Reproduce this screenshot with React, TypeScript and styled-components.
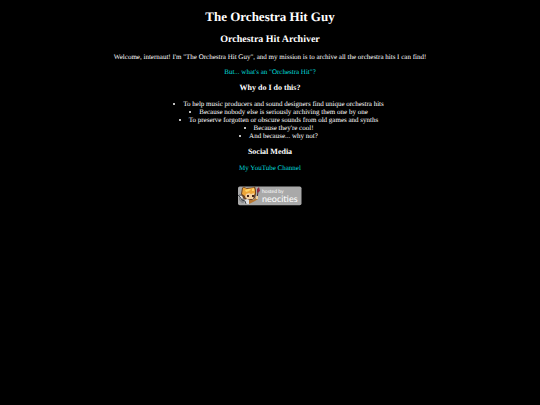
import React from "react";
import styled, { createGlobalStyle } from "styled-components";

const GlobalStyle = createGlobalStyle`
  body {
    margin: 0;
    background: #000;
    color: #fff;
    font-family: "Liberation Serif", "Times New Roman", serif;
    font-size: 7px;
    line-height: 8px;
    text-align: center;
    text-rendering: geometricPrecision;
  }
`;

const Page = styled.main`
  display: flex;
  flex-direction: column;
  gap: 7px;
  padding: 9px 4px 4px;
`;

const Title = styled.h1`
  margin: 0 0 2px;
  font-size: 13px;
  line-height: 16px;
`;

const Subtitle = styled.h2`
  margin: 0;
  font-size: 10px;
  line-height: 12px;
`;

const Heading = styled.h3`
  margin: 0;
  font-size: 8px;
  line-height: 10px;
`;

const Paragraph = styled.p`
  margin: 0;
`;

const Link = styled.a`
  color: #00dede;
  text-decoration: none;
`;

const Reasons = styled.ul`
  margin: 0;
  padding: 0 0 0 17px;
  list-style-position: inside;
`;

const Badge = styled.a`
  align-self: center;
  display: block;
  margin-top: 7px;
  line-height: 0;
`;

const BadgeText = styled.text<{ $size: number }>`
  fill: #fff;
  font-family: Lato, "Open Sans", sans-serif;
  font-size: ${({ $size }) => $size}px;
`;

const reasons = [
  "To help music producers and sound designers find unique orchestra hits",
  "Because nobody else is seriously archiving them one by one",
  "To preserve forgotten or obscure sounds from old games and synths",
  "Because they're cool!",
  "And because... why not?",
];

function HostBadge() {
  return (
    <svg width="64" height="20" viewBox="0 0 64 20" role="img" aria-label="Hosted by Neocities">
      <rect x="0" y="0.5" width="63.5" height="18.7" rx="1.8" fill="#a9a9a9" />
      <path d="M1 8 4 8 8 12 8 16 4 17 1 14Z" fill="#85878a" />
      <path d="M4 2 6 0.5 8 2 14 1.5 17 0.5 18 4 18 8 17 12 14 14 8 14 5 12 3 8Z" fill="#6b4424" />
      <path d="M5 2 6 1.5 9 3 14 2 16 1.5 17 4 17 8 15 10 7 10 4 8Z" fill="#eda63a" />
      <path d="M7 4 10 3 13 3 11 5 8 6ZM14 3 16 2 16 5 14 5Z" fill="#ffd56a" />
      <path d="M8 8 11 7 13 8 16 7 16 10 15 13 9 13 7 11Z" fill="#f5d0a0" />
      <path d="M9 9h2v2H9zM14 9h2v2h-2z" fill="#42261d" />
      <path d="M1 10 4 10 5 12 3 14ZM6 14 9 13 12 14 11 18 7 18Z" fill="#e0e0e0" />
      <path d="M0 9 2 11 4 14 7 15 8 18" fill="none" stroke="#42464b" />
      <path d="M11 14 15 14 18 12 20 13 17 15 11 18Z" fill="#b87832" />
      <path d="M19 12 20 6" stroke="#4b3030" />
      <path d="M19 7 19 3 21 1 22 5Z" fill="#8f263d" />
      <path d="M18 10h2v3h-2z" fill="#f3cf9a" />
      <BadgeText $size={5} x="24" y="7">hosted by</BadgeText>
      <BadgeText $size={9} x="24" y="16">neocities</BadgeText>
    </svg>
  );
}

export default function App() {
  return (
    <>
      <GlobalStyle />
      <Page>
        <Title>The Orchestra Hit Guy</Title>
        <Subtitle>Orchestra Hit Archiver</Subtitle>
        <Paragraph>
          Welcome, internaut! I'm "The Orchestra Hit Guy", and my mission is to archive all the orchestra hits I can find!
        </Paragraph>
        <Paragraph>
          <Link href="#orchestra-hit">But... what's an "Orchestra Hit"?</Link>
        </Paragraph>
        <Heading>Why do I do this?</Heading>
        <Reasons>
          {reasons.map((reason) => (
            <li key={reason}>{reason}</li>
          ))}
        </Reasons>
        <Heading>Social Media</Heading>
        <Paragraph>
          <Link href="#youtube">My YouTube Channel</Link>
        </Paragraph>
        <Badge href="#neocities">
          <HostBadge />
        </Badge>
      </Page>
    </>
  );
}
